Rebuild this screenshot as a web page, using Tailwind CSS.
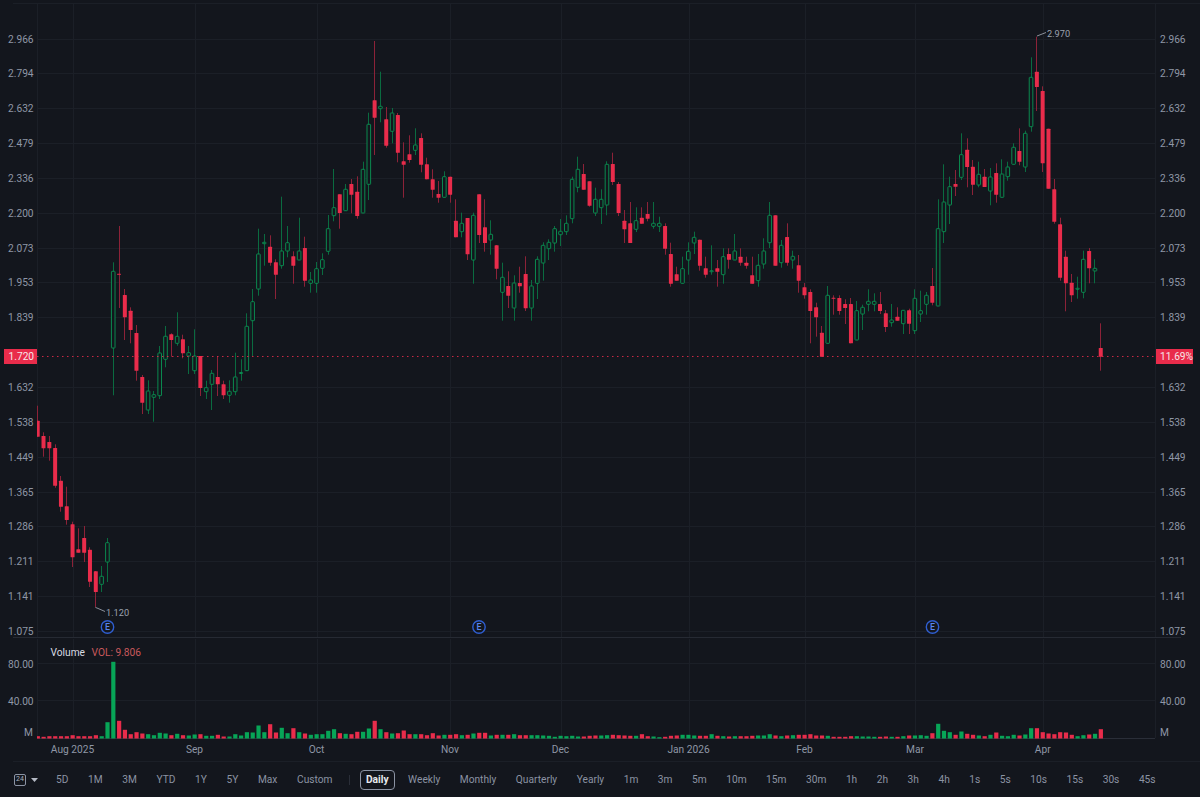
<!DOCTYPE html>
<html lang="en">
<head>
    <meta charset="UTF-8">
    <title>Chart</title>
    <script src="https://cdn.jsdelivr.net/npm/@tailwindcss/browser@4"></script>
</head>
<body class="bg-[#13161d] w-[1200px] h-[797px] overflow-hidden font-['Roboto',sans-serif]">
    <div class="flex flex-col h-full">
        <svg id="price-pane" class="block shrink-0" width="1200" height="638" viewBox="0 0 1200 638"></svg>
        <svg id="volume-pane" class="block shrink-0" width="1200" height="124" viewBox="0 637 1200 124"></svg>

        <div class="flex items-center h-[39px] pl-[14px] text-[10.2px] text-[#8b93a3] whitespace-nowrap">
            <div class="flex items-center gap-[5px] mr-[18px]">
                <span class="flex items-center justify-center w-[12px] h-[12px] border border-[#8b93a3] rounded-[2px] text-[7px] leading-none text-[#aab0bd]">24</span>
                <svg width="7" height="4" viewBox="0 0 7 4"><path d="M0 0H7L3.5 4Z" fill="#b4b9c4"/></svg>
            </div>
            <div class="flex items-center gap-[19.6px]">
                <span>5D</span><span>1M</span><span>3M</span><span>YTD</span><span>1Y</span><span>5Y</span><span>Max</span><span>Custom</span>
            </div>
            <div class="w-px h-[10px] bg-[#2a2e38] ml-[16px] mr-[10px]"></div>
            <span class="px-[5.5px] h-[20px] leading-[18px] border border-[#8b93a3] rounded-[4px] font-bold text-[#e6e8ec] mr-[13px]">Daily</span>
            <div class="flex items-center gap-[19.5px]">
                <span>Weekly</span><span>Monthly</span><span>Quarterly</span><span>Yearly</span><span>1m</span><span>3m</span><span>5m</span><span>10m</span><span>15m</span><span>30m</span><span>1h</span><span>2h</span><span>3h</span><span>4h</span><span>1s</span><span>5s</span><span>10s</span><span>15s</span><span>30s</span><span>45s</span>
            </div>
        </div>
    </div>

    <script>
        const RED = '#e92c4b', GREEN = '#0b8a4f', RED_WICK = '#8c2238', GREEN_WICK = '#0a6b40';
        const VOL_GREEN = '#07a557', GRID = '#1b1f27', AXIS = '#8f96a6';
        const X0 = 37.7, STEP = 5.809;

        // y pixels: high, body top, body bottom, low, colour
        const candles = [
            [405.7,420.7,436.7,436.7,'r'],[432.3,436,448.3,456.7,'r'],[436,442,448.3,460.7,'r'],[444.3,448,485.7,487.7,'r'],[476,480.7,506.7,511.7,'r'],
            [486.7,506.3,520,524.7,'r'],[521.7,524.3,557.3,567,'r'],[528.3,549.3,552.7,552.7,'r'],[526,538,552.7,562,'r'],[547.3,549.7,581.7,587,'r'],
            [571,571.3,592,607.3,'r'],[566,576.3,584.3,592,'g'],[538,542.7,562,582,'g'],[262.3,271.3,348,395.3,'g'],[226,273.7,274.7,308,'r'],
            [289,295,317.3,340,'r'],[307.3,310.7,330,343.3,'r'],[325,333,370.7,380.7,'r'],[375,377,402.7,414,'r'],[380.3,391,410,414,'g'],
            [391,394.7,397.3,421.7,'g'],[346,353,395.7,399,'g'],[326,336.3,359.3,367.3,'g'],[333.3,334.3,340,356.7,'r'],[312.3,336.3,343.3,345.7,'g'],
            [334.7,339.3,353.3,358.3,'r'],[346,352.7,356,374,'g'],[329.3,356,370.7,374,'g'],[356,356,388,396,'r'],[380.7,387.7,391.7,399,'g'],
            [370,373.3,384.3,410,'g'],[356,377,384.3,396,'r'],[380.7,384.3,395.3,399,'r'],[380.3,391.3,395.3,402.7,'g'],[352.7,377,391.7,395.3,'g'],
            [359.3,372.5,373.5,380.7,'g'],[313.3,326.3,370.7,371,'g'],[289,301.7,320.7,356,'g'],[228.7,254,289,295.7,'g'],[234,242.3,243.7,265.7,'g'],
            [235.3,246.7,262.7,265.7,'r'],[259.3,262.3,274.7,299,'r'],[196.7,251,265.7,268.7,'g'],[226,242.7,251,257.3,'g'],[251.3,256.3,265.7,283.7,'r'],
            [217.7,251,260,260,'g'],[236.7,248,280.7,286.7,'r'],[272,280,283.3,292.7,'g'],[262,268.7,283.3,292.7,'g'],[253.3,259.7,268.3,275,'g'],
            [215,228.7,251.3,254.7,'g'],[169,207.7,215.7,221.3,'g'],[194.3,194.3,213,228.7,'r'],[184,189.3,210.7,210.7,'g'],[179,184,194.7,213.3,'r'],
            [176.3,191.7,216,218.7,'r'],[161.7,169.3,213,213,'g'],[112.7,124.3,184.3,200,'g'],[41,100.3,117.7,155,'r'],[71.7,106.3,108.7,122.3,'g'],
            [107,119.3,145.7,147.7,'r'],[108,113,131.3,143.3,'g'],[113,115,152.7,162.3,'r'],[142.3,161.3,164.7,197.7,'r'],[135.3,154.3,160,162.7,'r'],
            [128.3,145,150.3,155,'g'],[133.3,138,164.7,172.3,'r'],[157.7,164.3,179.3,179.3,'r'],[169.3,179.3,189.7,197.7,'r'],[181,194,197.7,202.7,'r'],
            [171.3,176.7,197.3,197.3,'g'],[176.7,176.7,194.7,202.7,'r'],[199.3,220.7,237.3,237.3,'r'],[212.7,223.3,231.7,237.3,'g'],[218,218,254.3,260,'r'],
            [212.7,215.3,260,283.7,'g'],[194.3,194.3,235,243,'r'],[199.3,227.3,243,251.7,'r'],[220.3,234.3,240,254.7,'g'],[245,245.3,268.7,279.3,'r'],
            [262.7,277.3,292.3,320.7,'g'],[271.3,286,295.7,308,'r'],[275.3,283,308,320.7,'g'],[266.7,283,286.3,292.7,'r'],[256.3,274,308.3,311,'r'],
            [280,286,308,320.7,'g'],[256.3,259.3,283.3,299,'g'],[242.3,245.3,263,280.7,'g'],[239.3,242.3,248.7,260,'g'],[226,228.7,243,251.7,'g'],
            [219,231.3,234.7,246,'g'],[215.3,223.3,231.7,235,'g'],[176.7,179.3,218.7,223.3,'g'],[156.7,169.3,187.3,192.3,'g'],[164,174,189.7,189.7,'r'],
            [181.3,181.3,205.7,206.7,'r'],[187.7,199.3,213,216,'g'],[189.3,199.3,207.7,224,'g'],[161.3,164.3,205,215.3,'g'],[152.7,164,182,185,'r'],
            [182,184,213,216,'r'],[210,220.7,229.3,243,'r'],[202,223.3,243,243,'r'],[207.3,220.7,229.3,232,'g'],[207.3,217.7,223.7,223.7,'r'],
            [202,214,218.7,221.3,'r'],[202,223.3,226.3,228.7,'g'],[216.7,223.3,226.3,232,'g'],[223.3,226,248.7,254.7,'r'],[242.7,254,283.7,286.7,'r'],
            [266.7,274.3,280.7,280.7,'r'],[256.7,268.7,283.3,283.3,'g'],[242.3,251.3,260,274.7,'g'],[231.7,237.3,243,254,'g'],[239.7,239.7,265.7,270.7,'r'],
            [256.7,268.3,274.7,277.7,'r'],[245.3,270.7,271.7,274.7,'g'],[260,268.3,271.7,286.7,'r'],[248.3,256.7,274.7,283.7,'g'],[248.3,254,259.7,268.7,'r'],
            [234,251,260,260,'g'],[248.3,256.7,262.7,265.7,'r'],[256.7,262.7,265.7,268.7,'r'],[256.7,275.3,283.7,283.7,'r'],[254,265.3,280.7,286.7,'g'],
            [238.3,251,264,268.7,'g'],[202,215.3,242.7,248,'g'],[215.3,215.3,265.7,265.7,'r'],[240,245.3,262.7,267.7,'g'],[223.3,237,262.7,265.7,'r'],
            [250.7,256.3,260,268.7,'g'],[255,265.3,280.7,292.7,'r'],[283,287.3,295.3,298.7,'r'],[289.3,292,311,343.3,'r'],[302.7,307.3,317.3,336.7,'r'],
            [326,332.7,356.7,356.7,'r'],[286,295.3,343.3,343.3,'g'],[295.3,297.7,298.7,314.7,'r'],[295.3,298,311,314.7,'r'],[299.3,304,308,324,'r'],
            [298,304,343.3,343.3,'r'],[301,310.7,340,340,'g'],[304.7,307.3,314,330,'g'],[289.3,301.3,304.3,311.3,'g'],[293.3,301.3,304.3,311.3,'g'],
            [292,304,311,314,'r'],[310,313.3,327,332,'r'],[304,320,322.7,326.7,'g'],[307.3,316.7,320.7,320.7,'r'],[310,310.3,323.7,334,'g'],
            [308.7,310.3,323.7,334,'r'],[289.3,298.3,330.7,334,'g'],[290.7,310.7,314,322,'g'],[292,295.3,304.3,314.7,'g'],[268,286,302.7,305.3,'r'],
            [199.3,228.7,306,306,'g'],[164.3,202,231.7,243,'g'],[176.7,186.7,205,224,'g'],[170,184,186.7,196,'r'],[133.3,154.7,177.3,180,'g'],
            [138.3,149.7,167,187.3,'r'],[160,166.7,184.7,195,'r'],[161.7,174.3,185,187.3,'g'],[169,176.7,187,187,'r'],[168,177,191,205.3,'g'],
            [163.3,173,194.7,202.7,'r'],[159.3,174,197.3,197.3,'g'],[161.7,167,176.7,180.7,'g'],[143.3,147.3,164.3,164.3,'g'],[128.3,151,161.7,165.3,'r'],
            [130.7,133.3,167,172,'g'],[57.3,77.3,126.7,131.7,'g'],[36.7,71.7,87,111,'r'],[86.3,91,163.3,172,'r'],[128.7,128.7,188.7,188.7,'r'],
            [179,189.3,221.7,223.7,'r'],[217.7,224.3,277.7,280.7,'r'],[250.7,256.7,283.3,311.3,'r'],[274,282.7,295.3,302,'r'],[276.7,288.3,289.3,298.7,'g'],
            [250.7,259.3,292.3,298.3,'g'],[248,251,268.3,283.3,'r'],[259.3,268.3,271,283.3,'g'],[323.3,348,356.7,370.7,'r']
        ];

        // bar heights in pixels, negative = red
        const volumes = [
            -2.3,-1.7,-2.3,-2.3,-2.3,-2.3,-3.3,-2.3,-2.3,-2.3,-3.3,2.3,16.3,76.7,-17.7,-8.7,-4.3,-6.3,-5,4.3,
            3.3,5.7,5,-3.3,4.7,-3.3,3,4,-4.3,2.7,2.7,-3.7,-2,2,4.3,3,6.3,6,13,6.3,
            -14.3,-6,10.7,5.3,-10.3,6.3,-5,3.7,4.3,4.3,7.7,9.3,-5.3,4.7,-4.3,-6.7,6.7,10,-17.7,9.3,
            -6.3,5,-5.3,-8,-4.3,4.3,-4.3,-3.3,-5.3,-3,3.7,-3.7,-4.3,3.3,-3.7,5,-5.7,-5.7,3,-3.7,
            3.7,-3.7,4.3,-3.3,-3.3,3.3,3.3,3,2.7,1.7,2.7,2.3,2.7,2,-2,-2.7,-3,3,3.3,-3.7,
            -3.3,-3,-2.7,2.7,-4.3,-2.3,2,1.3,-1.7,-2.7,-3,3.7,3.7,3,-2.7,-2.7,4.3,-2.7,2.3,-2,
            2.3,-2.3,-2.3,-2.7,3,3,4.3,-3,2.3,-3,3.3,-3.7,-3.7,-4.3,-3,-3,2.7,-1.7,-1.7,-1.7,
            -2.3,2.3,2,2,1.7,-1.7,-2,1.7,-1.7,2.3,-3,3,3.3,2.7,-5.3,14.7,7.7,6.3,-3.7,7,
            -4.7,-3.7,3,-2.3,3.7,-6,2.7,2.3,3.7,-3,4,10.3,-10.3,-6.3,-5,-4.3,-6.3,-6,-3.7,2.3,
            3.3,-4,4.7,-9.3
        ];

        const priceLabels = ['2.966','2.794','2.632','2.479','2.336','2.200','2.073','1.953','1.839',null,'1.632','1.538','1.449','1.365','1.286','1.211','1.141','1.075'];
        const months = [['Aug 2025',72.5],['Sep',194.5],['Oct',316.5],['Nov',450],['Dec',560.5],['Jan 2026',688.5],['Feb',804.5],['Mar',915],['Apr',1042.7]];

        function label(x, y, text, color, anchor, size, weight) {
            return `<text x="${x}" y="${y}" fill="${color}" text-anchor="${anchor || 'start'}" font-size="${size || 10.2}" font-weight="${weight || 400}">${text}</text>`;
        }

        // price pane
        let p = `<defs><clipPath id="plot"><rect x="37" y="0" width="1118" height="800"/></clipPath></defs>`;
        p += `<line x1="13" x2="1200" y1="3.5" y2="3.5" stroke="${GRID}"/>`;
        months.forEach(m => { const x = Math.round(m[1]) + .5; p += `<line x1="${x}" x2="${x}" y1="4" y2="637" stroke="${GRID}"/>`; });
        p += `<line x1="37.5" x2="37.5" y1="4" y2="637" stroke="${GRID}"/><line x1="1155.5" x2="1155.5" y1="4" y2="637" stroke="${GRID}"/>`;
        priceLabels.forEach((t, i) => {
            const y = Math.round(38.5 + i * 34.85) + .5;
            if (t) {
                p += `<line x1="37" x2="1155" y1="${y}" y2="${y}" stroke="${GRID}"/>`;
                p += label(8, y + 3.5, t, AXIS) + label(1160, y + 3.5, t, AXIS);
            }
        });
        p += `<line x1="13" x2="1181" y1="637.5" y2="637.5" stroke="#262a33"/>`;

        p += `<g clip-path="url(#plot)">`;
        candles.forEach((c, i) => {
            const x = X0 + i * STEP, wx = Math.round(x - .5) + .5, red = c[4] === 'r';
            const h = Math.max(c[2] - c[1], 1);
            p += `<line x1="${wx}" x2="${wx}" y1="${c[0]}" y2="${c[3]}" stroke="${red ? RED_WICK : GREEN_WICK}"/>`;
            if (red) {
                p += `<rect x="${(x - 2).toFixed(2)}" y="${c[1]}" width="4" height="${h}" fill="${RED}" rx=".5"/>`;
            } else {
                p += `<rect x="${(x - 1.8).toFixed(2)}" y="${c[1]}" width="3.6" height="${h}" fill="#13161d" stroke="${GREEN}" rx=".5"/>`;
            }
        });
        p += `</g>`;

        // last price line and badges
        p += `<line x1="37" x2="1155" y1="356.5" y2="356.5" stroke="${RED}" stroke-opacity=".85" stroke-dasharray="1.5 3.5"/>`;
        p += `<rect x="4" y="349" width="33" height="15" fill="${RED}"/>` + label(8.5, 360, '1.720', '#f6e6e9');
        p += `<rect x="1156" y="349" width="37" height="15" fill="${RED}"/>` + label(1160, 360, '11.69%', '#f6e6e9');

        // high / low notes
        p += `<path d="M95.5 607.5 L97 608 L105 611.5" stroke="#8a8f9a" fill="none"/>` + label(106, 616, '1.120', '#9ca2af', 'start', 9.2);
        p += `<path d="M1037 36 L1046 32.5" stroke="#8a8f9a" fill="none"/>` + label(1047, 36.5, '2.970', '#9ca2af', 'start', 9.2);

        // earnings markers
        [107.5, 479, 932.5].forEach(x => {
            p += `<circle cx="${x}" cy="627" r="6.2" fill="#13161d" stroke="#2f5ed0" stroke-width="1.4"/>`;
            p += label(x, 630.2, 'E', '#5a86ee', 'middle', 8.8, 500);
        });
        document.getElementById('price-pane').innerHTML = p;

        // volume pane
        let v = `<defs><clipPath id="vol-plot"><rect x="37" y="637" width="1118" height="124"/></clipPath></defs>`;
        months.forEach(m => { const x = Math.round(m[1]) + .5; v += `<line x1="${x}" x2="${x}" y1="638" y2="737" stroke="${GRID}"/>`; });
        v += `<line x1="37.5" x2="37.5" y1="638" y2="737" stroke="${GRID}"/><line x1="1155.5" x2="1155.5" y1="638" y2="737" stroke="${GRID}"/>`;
        [[663, '80.00'], [700, '40.00']].forEach(r => {
            v += `<line x1="37" x2="1155" y1="${r[0] - .5}" y2="${r[0] - .5}" stroke="${GRID}"/>`;
            v += label(8, r[0] + 3.5, r[1], AXIS) + label(1160, r[0] + 3.5, r[1], AXIS);
        });
        v += label(33, 735, 'M', AXIS, 'end') + label(1160, 735, 'M', AXIS);
        v += `<line x1="37" x2="1155" y1="737.5" y2="737.5" stroke="#2a2e38"/>`;
        v += `<g clip-path="url(#vol-plot)">`;
        volumes.forEach((h, i) => {
            const x = X0 + i * STEP - 2, a = Math.abs(h);
            v += `<rect x="${x.toFixed(2)}" y="${(737.5 - a).toFixed(1)}" width="4.2" height="${a}" fill="${h < 0 ? RED : VOL_GREEN}"/>`;
        });
        v += `</g>`;
        v += label(50.5, 655, 'Volume', '#d8dbe2') + label(91.5, 655, 'VOL: 9.806', '#c9595c');
        months.forEach(m => { v += label(m[1], 752, m[0], AXIS, 'middle'); });
        v += `<line x1="13" x2="1200" y1="760.5" y2="760.5" stroke="${GRID}"/>`;
        document.getElementById('volume-pane').innerHTML = v;
    </script>
</body>
</html>
